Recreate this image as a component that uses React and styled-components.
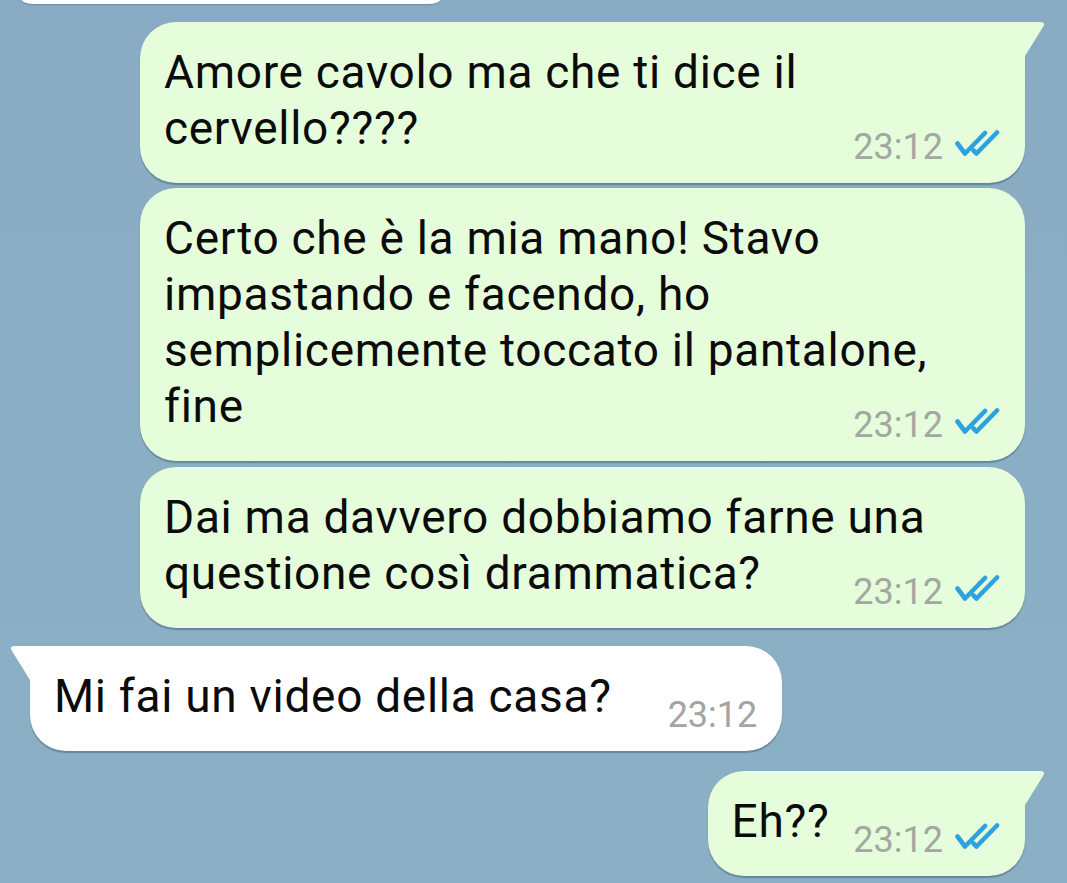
import React from "react";
import styled, { createGlobalStyle } from "styled-components";

const GlobalStyle = createGlobalStyle`
  html, body {
    margin: 0;
    padding: 0;
    background: #89acc3;
  }
  body {
    font-family: Roboto, "Liberation Sans", sans-serif;
  }
`;

const Chat = styled.div`
  width: 1067px;
  height: 883px;
  overflow: hidden;
  box-sizing: border-box;
  display: flex;
  flex-direction: column;
  padding: 0 42px 0 8px;
  background: linear-gradient(180deg, #88abc3 0%, #8aaec4 50%, #8bafc5 100%);
`;

const Stub = styled.div`
  margin-left: 14px;
  width: 418px;
  height: 4px;
  background: #fff;
  border-radius: 0 0 12px 12px / 0 0 4px 4px;
  box-shadow: 0 1px 1px rgba(50, 80, 100, 0.35);
`;

const Bubble = styled.div`
  position: relative;
  display: flow-root;
  box-sizing: border-box;
  max-width: 885px;
  margin-top: ${(p) => p.$gap}px;
  padding: 22px 25px 16px 24px;
  align-self: ${(p) => (p.$out ? "flex-end" : "flex-start")};
  margin-left: ${(p) => (p.$out ? 0 : 22)}px;
  background: ${(p) => (p.$out ? "#e5fddb" : "#ffffff")};
  border-radius: ${(p) =>
    p.$tail ? (p.$out ? "36px 0 36px 36px" : "0 36px 36px 36px") : "36px"};
  box-shadow: 0 1.5px 1px rgba(45, 75, 95, 0.4);
  font-size: 46px;
  letter-spacing: 0.7px;
  line-height: 56px;
  color: #0b0b0b;
`;

const Tail = styled.svg`
  position: absolute;
  top: 0;
  width: 23px;
  height: 37px;
  ${(p) =>
    p.$out
      ? "right: -21px;"
      : "left: -21px; transform: scaleX(-1);"}
`;

const Meta = styled.span`
  float: right;
  display: flex;
  align-items: center;
  gap: 11px;
  height: 40px;
  margin: 27px 0 0 ${(p) => (p.$out ? 24 : 56)}px;
  font-size: 36px;
  letter-spacing: 0;
  line-height: 40px;
  color: ${(p) => (p.$out ? "#a3a7a2" : "#a4a4a4")};
`;

const Checks = styled.svg`
  width: 46px;
  height: 28px;
  margin-top: -6px;
`;

const DoubleCheck = () => (
  <Checks viewBox="0 0 46 28">
    <g
      fill="none"
      stroke="#2ca3de"
      strokeWidth="4.6"
      strokeLinecap="round"
      strokeLinejoin="round"
    >
      <path d="M3.5 13.5 L11 23.5 L31 3" />
      <path d="M19.5 20.5 L22.5 23.5 L43 2.5" />
    </g>
  </Checks>
);

const Message = ({ out, tail, gap, children }) => (
  <Bubble $out={out} $tail={tail} $gap={gap}>
    {tail && (
      <Tail $out={out} viewBox="0 0 23 37">
        <path
          d="M-1 0 H17 Q23 0 20 5 L2 34 L-1 37 Z"
          fill={out ? "#e5fddb" : "#ffffff"}
        />
      </Tail>
    )}
    {children}
    <Meta $out={out}>
      23:12
      {out && <DoubleCheck />}
    </Meta>
  </Bubble>
);

export default function App() {
  return (
    <>
      <GlobalStyle />
      <Chat>
        <Stub />
        <Message out tail gap={18}>
          Amore cavolo ma che ti dice il cervello????
        </Message>
        <Message out gap={5}>
          Certo che è la mia mano! Stavo impastando e facendo, ho
          semplicemente toccato il pantalone, fine
        </Message>
        <Message out gap={6}>
          Dai ma davvero dobbiamo farne una questione così drammatica?
        </Message>
        <Message tail gap={18}>
          Mi fai un video della casa?
        </Message>
        <Message out tail gap={20}>
          Eh??
        </Message>
      </Chat>
    </>
  );
}
